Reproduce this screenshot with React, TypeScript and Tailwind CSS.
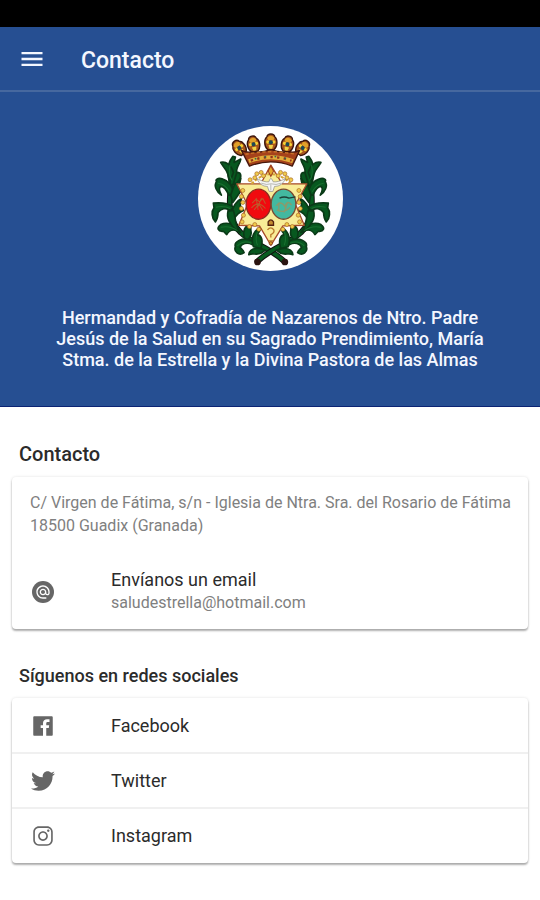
import React from 'react';
import { IoLogoFacebook, IoLogoTwitter, IoLogoInstagram } from 'react-icons/io';
import { MdAlternateEmail, MdMenu } from 'react-icons/md';

const socials = [
    { name: 'Facebook', href: '#facebook', icon: <IoLogoFacebook size={26} /> },
    { name: 'Twitter', href: '#twitter', icon: <IoLogoTwitter size={26} /> },
    { name: 'Instagram', href: '#instagram', icon: <IoLogoInstagram size={26} /> },
];

// Left half of the laurel wreath, the right half is its mirror
const leaves = [
    'M124 212 C112 190 106 152 128 124 L136 126 L132 142 L152 132 C150 146 136 158 140 172 C144 188 136 204 124 212Z',
    'M118 206 C118 184 112 168 100 154 L92 142 C108 138 124 150 130 172Z',
    'M116 240 C108 222 98 214 92 214 C84 218 90 232 94 240 C80 230 70 212 80 198 C74 196 82 186 98 192 C118 198 128 216 130 236Z',
    'M122 286 C108 276 92 280 84 292 C84 304 82 312 76 320 C64 308 64 288 72 278 L70 264 C88 262 114 264 130 276Z',
    'M122 240 C130 218 130 204 152 190 L148 208 L158 218 C150 232 138 248 128 262Z',
    'M124 290 C132 272 138 258 154 250 L150 270 L160 286 C150 290 138 300 132 312Z',
    'M142 348 C128 340 116 348 110 358 L100 348 C84 350 78 338 92 328 C112 318 138 328 152 352Z',
    'M144 340 C134 322 136 302 130 286 L114 288 C108 306 120 330 140 346Z',
    'M162 366 C158 344 164 334 182 322 L182 344 C186 358 180 368 170 376Z',
    'M186 388 C170 378 154 386 150 396 C154 402 160 404 162 412 C146 424 130 408 136 394 C130 380 156 362 190 378Z',
    'M190 394 C180 366 192 344 214 334 C214 346 204 350 202 358 C214 360 220 376 212 400Z',
    'M208 400 C190 398 178 404 176 418 C188 412 198 420 212 414 L226 404Z',
    'M140 172 C156 172 156 190 140 204 L130 206Z',
];

function Branch() {
    return (
        <g>
            <path d="M124 200 C116 256 112 314 152 352 C184 384 234 394 282 438" fill="none" stroke="#111" strokeWidth="17" strokeLinecap="round" />
            <path d="M124 200 C116 256 112 314 152 352 C184 384 234 394 280 436" fill="none" stroke="#075c20" strokeWidth="11" strokeLinecap="round" />
            {leaves.map((d) => (
                <path key={d} d={d} fill="#07581f" stroke="#0a3a17" strokeWidth="5" strokeLinejoin="round" />
            ))}
            <path d="M120 150 Q114 180 126 196 M84 204 Q108 208 118 230 M78 276 Q102 270 120 280 M92 336 Q120 330 142 346 M142 392 Q160 374 184 384 M202 350 Q194 370 202 390" fill="none" stroke="#1a7030" strokeWidth="3" />
        </g>
    );
}

// Crown finials: centre and tilt of each one
const finials = [
    { x: 144, y: 94, r: -38 },
    { x: 189, y: 82, r: -12 },
    { x: 242, y: 76, r: 0 },
    { x: 293, y: 82, r: 12 },
    { x: 341, y: 94, r: 38 },
];

const beads = [
    [180, 194], [194, 188], [200, 176], [213, 172], [220, 182], [302, 194], [290, 188], [284, 176], [271, 172], [264, 182],
    [158, 226], [154, 244], [158, 262], [154, 280], [160, 300], [156, 320], [178, 334], [194, 328], [206, 342],
    [326, 226], [330, 244], [326, 262], [330, 280], [324, 300], [328, 320], [306, 334], [290, 328], [278, 342],
];

function Crest() {
    return (
        <svg viewBox="24 33 434 434" role="img" aria-label="Escudo de la Hermandad" className="size-[145px] rounded-full bg-white">
            <Branch />
            <g transform="translate(484 0) scale(-1 1)">
                <Branch />
            </g>
            <circle cx="202" cy="440" r="10" fill="#2b1410" />
            <circle cx="284" cy="440" r="10" fill="#2b1410" />

            {/* Crown */}
            {finials.map((f) => (
                <g key={f.x} transform={`translate(${f.x} ${f.y}) rotate(${f.r})`}>
                    <path d="M-9 28 C-22 16 -20 -4 -12 -10 C-10 -22 10 -22 12 -10 C20 -4 22 16 9 28Z" fill="#a8561c" stroke="#3c160c" strokeWidth="4" />
                    <path d="M-11 -8 Q0 -20 11 -8 L8 0 L-8 0Z" fill="#e0a02a" />
                    <circle cx="-9" cy="5" r="5" fill="#f5d033" />
                    <circle cx="9" cy="5" r="5" fill="#f5d033" />
                    <circle cy="6" r="6" fill="#1d4a55" />
                    <path d="M-7 14 L7 14 L4 25 L-4 25Z" fill="#f0d446" />
                </g>
            ))}
            <path d="M154 106 Q170 114 188 110 Q214 114 242 104 Q270 114 296 110 Q314 114 328 106 L306 153 Q242 128 178 153Z" fill="#a6421b" stroke="#46170c" strokeWidth="4" strokeLinejoin="round" />
            <path d="M166 118 Q242 102 318 118" fill="none" stroke="#c9752a" strokeWidth="4" strokeDasharray="10 7" />
            <path d="M176 138 Q242 115 308 138" fill="none" stroke="#e2ae3b" strokeWidth="12" />
            <path d="M182 137 Q242 115 304 137" fill="none" stroke="#94301c" strokeWidth="7" strokeDasharray="7 13" />
            <path d="M194 132 Q242 116 294 132" fill="none" stroke="#336d50" strokeWidth="5" strokeDasharray="5 25" />

            {/* Star */}
            <path d="M242 150 L276 206 L350 206 L316 268 L342 330 L278 332 L242 390 L208 332 L146 330 L172 268 L140 206 L212 206Z" fill="#f8ec97" stroke="#a64b2b" strokeWidth="4" strokeLinejoin="round" />
            <path d="M184 206 Q242 148 302 206" fill="none" stroke="#d6a637" strokeWidth="6" strokeDasharray="9 5" />
            {beads.map(([x, y]) => (
                <circle key={`${x}-${y}`} cx={x} cy={y} r="6" fill="#efca4b" stroke="#a96b27" strokeWidth="2" />
            ))}
            <path d="M242 152 L250 168 L242 184 L234 168Z" fill="#e4a52d" stroke="#9a3a1d" strokeWidth="3" />

            {/* Dove */}
            <path d="M200 190 Q222 202 236 200 Q242 180 249 200 Q264 202 286 190 Q276 214 253 214 L248 229 L237 229 L232 214 Q210 214 200 190Z" fill="#f6f6f4" stroke="#888a84" strokeWidth="2" />
            <path d="M213 204 Q230 211 243 206 Q257 211 273 204 M242 208 V226" fill="none" stroke="#999b96" strokeWidth="2" />

            {/* Shields */}
            <ellipse cx="205" cy="267" rx="37" ry="45" fill="#f10a0f" stroke="#8d2c22" strokeWidth="4" />
            <path d="M186 264 L198 252 L208 260 L218 250 L226 266 M184 278 Q204 254 226 280 M192 284 L206 266 L218 286 M198 248 L204 284 M214 248 L204 274" fill="none" stroke="#bd5a2b" strokeWidth="3" />
            <ellipse cx="280" cy="267" rx="37" ry="45" fill="#43b9a0" stroke="#7b4931" strokeWidth="4" />
            <path d="M258 272 Q272 254 284 274 Q292 252 304 270 M260 284 Q280 296 300 276 M266 262 V286 M292 262 L282 292" fill="none" stroke="#8a9a6c" strokeWidth="4" />
            <path d="M268 249 Q282 242 296 249 L316 245" fill="none" stroke="#1d4037" strokeWidth="4" />

            {/* Pendant */}
            <path d="M234 330 V320 Q242 308 250 320 V330Z" fill="#c28b2e" stroke="#54230f" strokeWidth="4" />
            <path d="M232 344 Q242 332 251 344 Q254 352 242 358 V367 M234 377 H250" fill="none" stroke="#b9792b" strokeWidth="4" />
            <circle cx="242" cy="384" r="5" fill="#d89c32" stroke="#7b2e18" strokeWidth="2" />
        </svg>
    );
}

const cardClass = 'rounded-sm bg-white shadow-[0_2px_2px_rgba(0,0,0,0.3),0_0_3px_rgba(0,0,0,0.12)]';

export default function App() {
    return (
        <div className="min-h-screen bg-white text-[#2b2b2b] font-[Roboto,sans-serif]">
            <div className="h-[27px] bg-black" />

            {/* Toolbar */}
            <header className="flex h-[65px] items-center gap-[35px] border-b-2 border-[#46689f] bg-[#264f92] px-[18px] text-[#f4f7ff]">
                <button type="button" aria-label="Menú">
                    <MdMenu size={28} />
                </button>
                <h1 className="pt-1 text-[23px] leading-8 font-medium">Contacto</h1>
            </header>

            {/* Brotherhood banner */}
            <section className="flex flex-col items-center gap-9 border-b border-[#0b2474] bg-[#264f92] px-12 pt-[34px] pb-9 text-center text-[#f4f7ff]">
                <Crest />
                <p className="text-lg leading-[21px] font-medium">
                    Hermandad y Cofradía de Nazarenos de Ntro. Padre Jesús de la Salud en su Sagrado Prendimiento, María Stma. de la Estrella y la Divina Pastora de las Almas
                </p>
            </section>

            <main className="px-3 pt-8 pb-9">
                <h2 className="px-[7px] pb-2 text-xl leading-[30px] font-medium">Contacto</h2>
                <div className={cardClass}>
                    <address className="pt-[14px] pr-2 pl-[18px] text-base leading-[23px] text-[#808080] not-italic">
                        C/ Virgen de Fátima, s/n - Iglesia de Ntra. Sra. del Rosario de Fátima
                        <br />
                        18500 Guadix (Granada)
                    </address>
                    <a href="mailto:saludestrella@hotmail.com" className="flex items-center px-[18px] pt-[31px] pb-[15px]">
                        <span className="flex w-[81px] shrink-0 pt-[2px] pl-[2px]">
                            <span className="flex size-[22px] items-center justify-center rounded-full bg-[#666666] text-white">
                                <MdAlternateEmail size={16} />
                            </span>
                        </span>
                        <span className="flex flex-col">
                            <span className="text-lg leading-[23px]">Envíanos un email</span>
                            <span className="text-base leading-[23px] text-[#808080]">saludestrella@hotmail.com</span>
                        </span>
                    </a>
                </div>

                <h2 className="px-[7px] pt-8 pb-2 text-lg leading-[29px] font-medium">Síguenos en redes sociales</h2>
                <ul className={`${cardClass} py-px`}>
                    {socials.map((s) => (
                        <li key={s.name} className="border-b-2 border-[#f0f0f0] last:border-b-0">
                            <a href={s.href} className="flex h-[53px] items-center px-[18px]">
                                <span className="w-[81px] shrink-0 text-[#666666]">{s.icon}</span>
                                <span className="text-lg">{s.name}</span>
                            </a>
                        </li>
                    ))}
                </ul>
            </main>
        </div>
    );
}
